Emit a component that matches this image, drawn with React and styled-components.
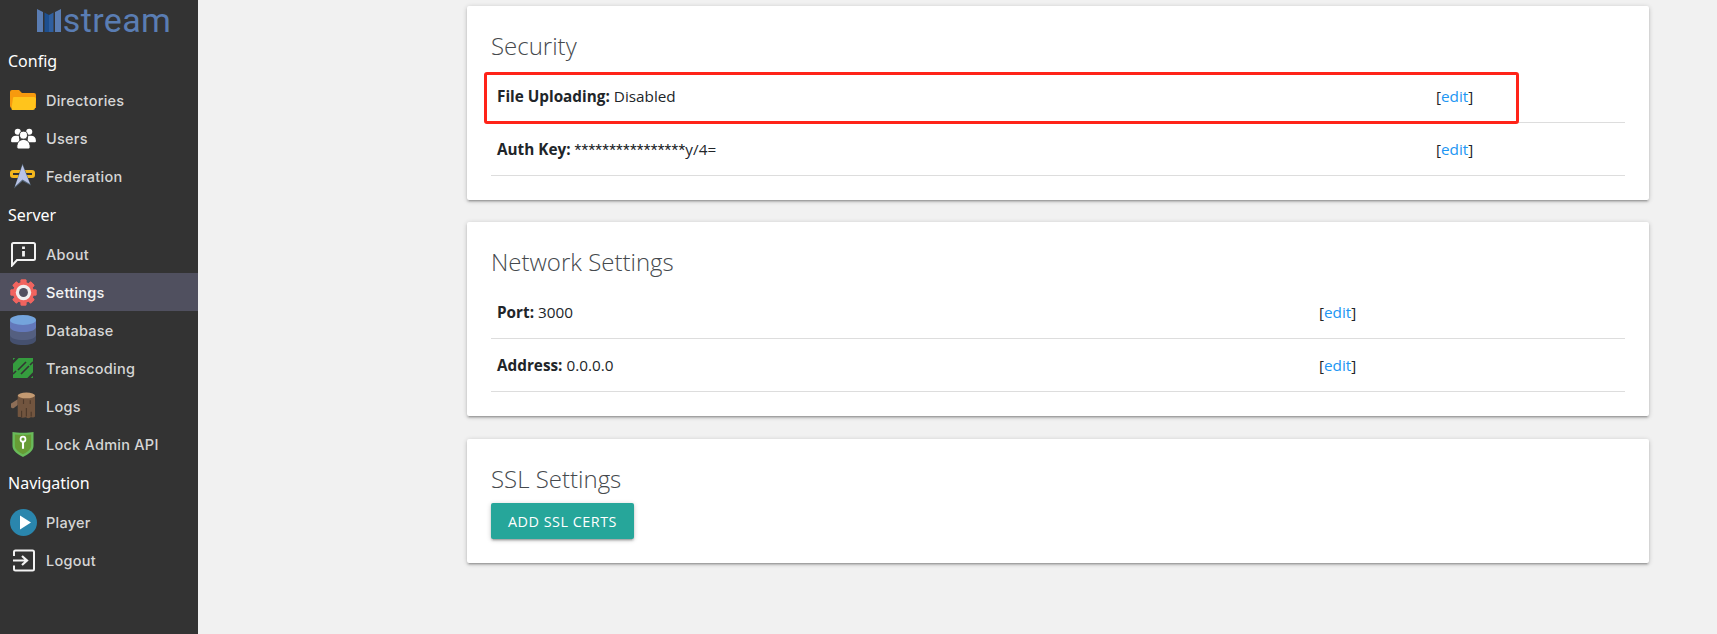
import React from "react";
import styled, { createGlobalStyle } from "styled-components";

const GlobalStyle = createGlobalStyle`
  html, body {
    margin: 0;
    height: 100%;
    background: #f1f1f1;
    font-family: "Open Sans", "Noto Sans", sans-serif;
    color: #212529;
  }
`;

const Page = styled.div`
  display: flex;
  height: 634px;
  overflow: hidden;
`;

const Sidebar = styled.aside`
  width: 198px;
  flex-shrink: 0;
  background: #333333;
  color: #fff;
  padding-top: 5px;
  box-sizing: border-box;
`;

const Logo = styled.div`
  display: flex;
  justify-content: center;
  align-items: center;
  gap: 2px;
  height: 30px;
  padding-left: 10px;
  color: #5a7db3;
  font-family: "Roboto", sans-serif;
  font-size: 34px;
  line-height: 30px;
  letter-spacing: 0.4px;
`;

const SectionTitle = styled.div`
  height: 39px;
  margin-top: ${(p) => p.$top}px;
  padding-left: 8px;
  font-family: "Noto Sans", sans-serif;
  font-size: 16px;
  line-height: 39px;
`;

const NavItem = styled.div`
  display: flex;
  align-items: center;
  height: 38px;
  background: ${(p) => (p.$active ? "#50505f" : "transparent")};
  color: ${(p) => (p.$active ? "#f4f4f4" : "#d6d6d6")};
`;

const IconSlot = styled.span`
  width: 46px;
  height: 38px;
  display: flex;
  align-items: center;
  justify-content: center;
  flex-shrink: 0;
`;

const NavLabel = styled.span`
  font-family: "Inter", sans-serif;
  font-size: 14.5px;
  font-weight: 500;
  letter-spacing: 0.25px;
`;

const Main = styled.main`
  flex: 1;
  padding: 6px 68px 0 269px;
  display: flex;
  flex-direction: column;
`;

const Card = styled.section`
  position: relative;
  margin-bottom: ${(p) => p.$after}px;
  background: #fff;
  border-radius: 2px;
  box-shadow: 0 2px 2px 0 rgba(0, 0, 0, 0.14), 0 3px 1px -2px rgba(0, 0, 0, 0.12),
    0 1px 5px 0 rgba(0, 0, 0, 0.2);
  padding: 24px;
`;

const CardTitle = styled.h2`
  margin: 0;
  height: 40px;
  font-family: "Open Sans", sans-serif;
  font-size: 24px;
  font-weight: 300;
  line-height: 32px;
  color: #45494d;
`;

const Row = styled.div`
  display: grid;
  grid-template-columns: ${(p) => p.$label}px 1fr;
  align-items: center;
  box-sizing: border-box;
  height: 53px;
  padding-left: 6px;
  border-bottom: 1px solid #dddddd;
  font-size: 15.3px;
`;

const Label = styled.b`
  font-weight: 700;
`;

const Masked = styled.span`
  font-family: "Roboto", sans-serif;
  font-size: 15.5px;
  letter-spacing: 0.25px;
`;

const EditLink = styled.span`
  color: #212529;
  & a {
    color: #2196f3;
    text-decoration: none;
  }
`;

const Highlight = styled.div`
  position: absolute;
  left: 17px;
  top: 66px;
  width: 1035px;
  height: 52px;
  border: 3px solid #ff2318;
  border-radius: 3px;
  pointer-events: none;
  box-sizing: border-box;
`;

const ActionButton = styled.button`
  display: block;
  height: 36px;
  width: 143px;
  padding: 0;
  border: none;
  border-radius: 2px;
  background: #26a69a;
  color: #fff;
  font-family: "Open Sans", sans-serif;
  font-size: 14.4px;
  letter-spacing: 0.5px;
  box-shadow: 0 2px 2px 0 rgba(0, 0, 0, 0.14), 0 3px 1px -2px rgba(0, 0, 0, 0.12),
    0 1px 5px 0 rgba(0, 0, 0, 0.2);
`;

const FolderIcon = () => (
  <svg width="26" height="20" viewBox="0 0 26 20">
    <path d="M0 2a2 2 0 0 1 2-2h7l3 3h12a2 2 0 0 1 2 2v13H2a2 2 0 0 1-2-2z" fill="#f79a0e" />
    <path d="M4 7h20a2 2 0 0 1 2 2l-1 9a2 2 0 0 1-2 2H3a1.500 1.500 0 0 1-1.500-2L3 8a1.500 1.500 0 0 1 1-1z" fill="#ffc41c" />
  </svg>
);

const UsersIcon = () => (
  <svg width="25" height="21" viewBox="0 0 26 22" fill="#fff">
    <circle cx="7" cy="4" r="3.200" />
    <circle cx="19" cy="4" r="3.200" />
    <path d="M0 13c0-3 2-5 5-5h3l1 7H1a1 1 0 0 1-1-1zM26 13c0-3-2-5-5-5h-3l-1 7h8a1 1 0 0 0 1-1z" />
    <circle cx="13" cy="7.500" r="4.200" stroke="#333" strokeWidth="1" />
    <path d="M6 20c0-5 3-8 7-8s7 3 7 8c0 1-1 2-2 2H8c-1 0-2-1-2-2z" stroke="#333" strokeWidth="1" />
  </svg>
);

const FederationIcon = () => (
  <svg width="26" height="26" viewBox="0 0 26 26">
    <rect x="0" y="7" width="25" height="8" rx="3" fill="#f3b71e" />
    <rect x="3" y="10" width="19" height="2" fill="#333" />
    <path d="M12.500 0.500 L21 22.500 L12.500 18 L4 25.500z" fill="#56697c" />
    <path d="M12.500 2 L20 21 L12.500 16.500 L5 23.500z" fill="#b9c3e6" />
  </svg>
);

const AboutIcon = () => (
  <svg width="25" height="25" viewBox="0 0 25 25" fill="none" stroke="#f2f2f2" strokeWidth="2">
    <path d="M1 23.500V2.500A1.500 1.500 0 0 1 2.500 1h20A1.500 1.500 0 0 1 24 2.500v14a1.500 1.500 0 0 1-1.500 1.500H6z" />
    <path d="M12.500 4.500v2.500M12.500 9v5.500" strokeWidth="2.800" />
  </svg>
);

const GearIcon = () => (
  <svg width="27" height="27" viewBox="0 0 28 28">
    <g fill="#f0645f">
      {[0, 45, 90, 135, 180, 225, 270, 315].map((a) => (
        <rect key={a} x="11" y="0.500" width="6" height="27" rx="1" transform={`rotate(${a} 14 14)`} />
      ))}
      <circle cx="14" cy="14" r="11" />
    </g>
    <circle cx="14" cy="14" r="8" fill="#eeeeee" />
    <circle cx="14" cy="14" r="4.600" fill="#50505f" />
  </svg>
);

const DatabaseIcon = () => (
  <svg width="26" height="30" viewBox="0 0 26 30">
    <path d="M0 20v5c0 3 6 5 13 5s13-2 13-5v-5z" fill="#45506e" />
    <path d="M0 12v8c0 3 6 5 13 5s13-2 13-5v-8z" fill="#545f80" />
    <path d="M0 5v7c0 3 6 5 13 5s13-2 13-5V5z" fill="#6378ba" />
    <ellipse cx="13" cy="5" rx="13" ry="5" fill="#74a4dc" />
  </svg>
);

const TranscodingIcon = () => (
  <svg width="22" height="22" viewBox="0 0 22 22">
    <path d="M1 1h20v20H1z" fill="#359c3e" />
    <g stroke="#333333" strokeWidth="1.600" fill="none">
      <path d="M-1 7L7 -1" strokeWidth="2.400" />
      <path d="M6 13L14 5" />
      <path d="M9 17L17 9" />
      <path d="M15 23L23 15" strokeWidth="2.400" />
      <path d="M1 17L4 14" />
      <path d="M18 8L21 5" />
    </g>
  </svg>
);

const LogIcon = () => (
  <svg width="25" height="30" viewBox="0 0 26 30">
    <path d="M1 12l6-4v6l-4 3a2.500 2.500 0 0 1-2-5z" fill="#8d6e57" />
    <path d="M7 4h18v22c-2 2-4 0-5 1s-3 1-4 0-3 1-5 0-3 0-4-1z" fill="#72553f" />
    <path d="M11 20v7M16 17v9M21 21v5M13 8v5M20 9v4" stroke="#4e3a2b" strokeWidth="1.200" />
    <ellipse cx="16" cy="4" rx="9" ry="3" fill="#c39a72" />
  </svg>
);

const ShieldIcon = () => (
  <svg width="22" height="28" viewBox="0 0 23 28">
    <path d="M0.500 1.500C5 2.500 18 2.500 22.500 1.500V16c0 5-6 9-11 11.500C6.500 25 0.500 21 0.500 16z" fill="#69bb5b" />
    <path d="M3 4c5 .6 12 .6 17 0v12c0 3.500-4.500 6.500-8.500 8.800C7.500 22.500 3 19.500 3 16z" fill="#679c35" />
    <circle cx="11.500" cy="9" r="2.600" fill="none" stroke="#fff" strokeWidth="1.800" />
    <path d="M11.500 11v8" stroke="#fff" strokeWidth="2.200" />
  </svg>
);

const PlayIcon = () => (
  <svg width="27" height="27" viewBox="0 0 27 27">
    <circle cx="13.500" cy="13.500" r="13.500" fill="#2a86ad" />
    <path d="M10 6.500l11 7-11 7z" fill="#fff" />
  </svg>
);

const LogoutIcon = () => (
  <svg width="23" height="23" viewBox="0 0 23 23" fill="none" stroke="#f2f2f2" strokeWidth="2">
    <path d="M2 7V3a1.500 1.500 0 0 1 1.500-1.500h17A1.500 1.500 0 0 1 22 3v17a1.500 1.500 0 0 1-1.500 1.500h-17A1.500 1.500 0 0 1 2 20v-3.500" />
    <path d="M1 11.500h13M10 7l5 4.500-5 4.500" strokeWidth="2.200" />
  </svg>
);

const LogoMark = () => (
  <svg width="24" height="24" viewBox="0 0 24 24">
    <path d="M0 1l6 3v20H0zM24 1l-6 3v20h6z" fill="#5a7db3" />
    <path d="M7.500 4.500L12 7v17H7.500z" fill="#1d4f8f" />
    <path d="M16.500 4.500L12 7v17h4.500z" fill="#2f5f9f" />
  </svg>
);

const sections = [
  {
    title: "Config",
    top: 7,
    items: [
      ["Directories", <FolderIcon />],
      ["Users", <UsersIcon />],
      ["Federation", <FederationIcon />],
    ],
  },
  {
    title: "Server",
    top: 1,
    items: [
      ["About", <AboutIcon />],
      ["Settings", <GearIcon />, true],
      ["Database", <DatabaseIcon />],
      ["Transcoding", <TranscodingIcon />],
      ["Logs", <LogIcon />],
      ["Lock Admin API", <ShieldIcon />],
    ],
  },
  {
    title: "Navigation",
    top: 1,
    items: [
      ["Player", <PlayIcon />],
      ["Logout", <LogoutIcon />],
    ],
  },
];

const SettingRow = ({ name, children, labelWidth }) => (
  <Row $label={labelWidth}>
    <span>
      <Label>{name}:</Label> {children}
    </span>
    <EditLink>
      [<a href="#edit">edit</a>]
    </EditLink>
  </Row>
);

const App = () => (
  <Page>
    <GlobalStyle />
    <Sidebar>
      <Logo>
        <LogoMark />
        stream
      </Logo>
      {sections.map((section) => (
        <div key={section.title}>
          <SectionTitle $top={section.top}>{section.title}</SectionTitle>
          {section.items.map(([label, icon, active]) => (
            <NavItem key={label} $active={active}>
              <IconSlot>{icon}</IconSlot>
              <NavLabel>{label}</NavLabel>
            </NavItem>
          ))}
        </div>
      ))}
    </Sidebar>
    <Main>
      <Card $after={22}>
        <CardTitle>Security</CardTitle>
        <SettingRow name="File Uploading" labelWidth={939}>Disabled</SettingRow>
        <SettingRow name="Auth Key" labelWidth={939}>
          <Masked>****************</Masked>y/4=
        </SettingRow>
        <Highlight />
      </Card>
      <Card $after={23}>
        <CardTitle>Network Settings</CardTitle>
        <SettingRow name="Port" labelWidth={822}>3000</SettingRow>
        <SettingRow name="Address" labelWidth={822}>0.0.0.0</SettingRow>
      </Card>
      <Card $after={0}>
        <CardTitle>SSL Settings</CardTitle>
        <ActionButton>ADD SSL CERTS</ActionButton>
      </Card>
    </Main>
  </Page>
);

export default App;
